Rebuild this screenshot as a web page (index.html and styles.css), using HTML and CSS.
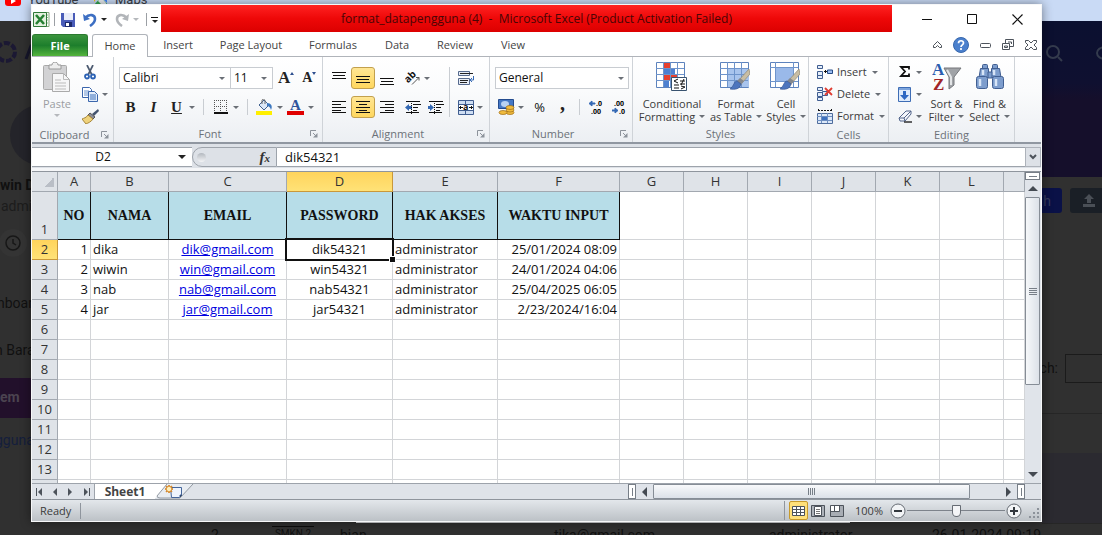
FILE: index.html
```html
<!DOCTYPE html>
<html lang="en">
<head>
<meta charset="utf-8">
<title>format_datapengguna (4) - Microsoft Excel</title>
<link rel="stylesheet" href="styles.css">
</head>
<body>
<svg class="defs" aria-hidden="true">
  <symbol id="launch" viewBox="0 0 8 8"><path d="M.5 6V.5H6M3 3l3 3" fill="none" stroke="#8d939b"/><path d="M7.500 3v4.500H3z" fill="#8d939b"/></symbol>
  <symbol id="brush" viewBox="0 0 20 22"><path d="M19 0 9 11l3 3L20 5z" fill="#c8bda4" stroke="#8f8671" stroke-width=".7"/><path d="m10 9-3 3 4 4 3-4z" fill="#85888d"/><path d="M7 12c-3 0-3 5-7 8 5 1 10 0 11-5z" fill="#4d75bd" stroke="#314f8c" stroke-width=".6"/></symbol>
</svg>

<div class="backdrop">
  <div class="browser-bar"></div>
  <div class="page-head"></div>
  <div class="bg-item yt-icon"><svg width="16" height="11" viewBox="0 0 16 11"><rect width="16" height="11" rx="3" fill="#f00"/><path d="m6 3 5 3-5 3z" fill="#fff"/></svg></div>
  <span class="bg-item bookmark yt-text">YouTube</span>
  <div class="bg-item maps-icon"><svg width="14" height="10" viewBox="0 0 14 10"><path d="M0 0h5l-5 7z" fill="#fbbc04"/><path d="M0 10 7 2l7 8z" fill="#34a853"/><path d="m7 2 2-2h4v8z" fill="#4285f4"/><path d="m4 6 3-4 5 6v2H8z" fill="#e9edf2"/></svg></div>
  <span class="bg-item bookmark maps-text">Maps</span>
  <div class="bg-item brand-mark"><svg width="34" height="26" viewBox="0 0 34 26"><g fill="none" stroke="#1b1833" stroke-width="4"><circle cx="6" cy="13" r="9" stroke-dasharray="6 2"/></g><path d="m26 20 5-13h3" fill="none" stroke="#16162b" stroke-width="3"/></svg></div>
  <div class="bg-item avatar"></div>
  <span class="bg-item bold user-name">win D</span>
  <span class="bg-item dim user-role">admin</span>
  <div class="bg-item clock"><svg width="30" height="30" viewBox="0 0 30 30"><circle cx="15" cy="15" r="14" fill="#343434"/><circle cx="15" cy="15" r="7" fill="none" stroke="#171717" stroke-width="1.500"/><path d="M15 11v4l3 2" fill="none" stroke="#171717" stroke-width="1.500"/></svg></div>
  <span class="bg-item side-a">nboar</span>
  <span class="bg-item side-b">n Bara</span>
  <div class="bg-item side-active">em</div>
  <a class="bg-item side-link" href="#">gguna</a>
  <div class="bg-item search-icon"><svg width="20" height="20" viewBox="0 0 20 20"><circle cx="8" cy="8" r="6" fill="none" stroke="#343b4d" stroke-width="2"/><path d="m13 13 4 4" stroke="#343b4d" stroke-width="2"/></svg></div>
  <div class="bg-item ring"></div>
  <button class="bg-item page-btn blue-btn">h</button>
  <button class="bg-item page-btn gray-btn" aria-label="Upload"><svg width="14" height="14" viewBox="0 0 14 14"><path d="m7 0 5 5H9v4H5V5H2zM1 10h12v3H1z" fill="#4a4f56"/></svg></button>
  <label class="bg-item filter" for="filter">ch:</label><input class="bg-item filter-box" id="filter">
  <div class="bg-item panel-rules"></div>
  <div class="bg-item strip"></div>
  <div class="bg-item under-row"><span>2</span><span class="unit">SMKN 2</span><span>bian</span><span>tika@gmail.com</span><span>administrator</span><span>26-01-2024 09:19</span></div>
</div>

<main class="window">
  <header class="titlebar">
    <div class="quick">
      <svg class="app" width="17" height="17" viewBox="0 0 17 17"><path d="M9 1.500h7v14H9z" fill="#fff" stroke="#86a67f"/><path d="M11 4h4M11 6.500h4M11 9h4M11 12h4" stroke="#8cb887"/><path d="M.5 1.500h13v14H.5z" fill="#e4f0df" stroke="#2f7938"/><path d="m3 4 8 9M11 4l-8 9" stroke="#268033" stroke-width="2.600"/></svg>
      <i class="vr small"></i>
      <button class="save" aria-label="Save"><svg width="14" height="14" viewBox="0 0 14 14"><path d="M0 0h14v14H2l-2-2z" fill="#4a5cb8"/><path d="M3 0h9v7H3z" fill="#e9edf9"/><path d="M4 9h7v5H4z" fill="#1d2a6c"/><path d="M5 10h3v3H5z" fill="#fff"/></svg></button>
      <button class="undo" aria-label="Undo"><svg width="14" height="14" viewBox="0 0 14 14"><path d="M2 5c5-5 10-3 10 1 0 3-2 5-5 7" fill="none" stroke="#3d6fc3" stroke-width="2.600"/><path d="m0 1 1 7 6-2z" fill="#3d6fc3"/></svg></button>
      <i class="caret dark"></i>
      <button class="redo" aria-label="Redo"><svg width="14" height="14" viewBox="0 0 14 14"><path d="M12 5C7 0 2 2 2 6c0 3 2 5 5 7" fill="none" stroke="#b2b5b9" stroke-width="2.600"/><path d="m14 1-1 7-6-2z" fill="#b2b5b9"/></svg></button>
      <i class="caret light"></i>
      <i class="vr small"></i>
      <button class="more" aria-label="Customize"><i class="bar"></i><i class="caret dark"></i></button>
    </div>
    <h1 class="title">format_datapengguna (4) &nbsp;-&nbsp; Microsoft Excel (Product Activation Failed)</h1>
    <div class="controls">
      <button aria-label="Minimize"><svg width="10" height="10"><path d="M0 5.500h10" stroke="#111"/></svg></button>
      <button aria-label="Maximize"><svg width="10" height="10"><path d="M.5.5h9v9h-9z" fill="none" stroke="#111"/></svg></button>
      <button aria-label="Close"><svg width="11" height="11"><path d="m.5.5 10 10m0-10-10 10" stroke="#111" stroke-width="1.200"/></svg></button>
    </div>
  </header>

  <nav class="tabs">
    <button class="file">File</button>
    <button class="tab active">Home</button>
    <button class="tab">Insert</button>
    <button class="tab t3">Page Layout</button>
    <button class="tab t4">Formulas</button>
    <button class="tab t5">Data</button>
    <button class="tab t6">Review</button>
    <button class="tab t7">View</button>
    <div class="doc-controls">
      <button aria-label="Collapse ribbon"><svg width="9" height="8" viewBox="0 0 9 8"><path d="m.5 4.500 4-4 4 4v2H6.500l-2-2-2 2h-2z" fill="#fff" stroke="#4d535b"/></svg></button>
      <button aria-label="Help"><svg width="16" height="16" viewBox="0 0 16 16"><circle cx="8" cy="8" r="7.500" fill="#4b80cd" stroke="#3767ad"/><path d="M5.500 6.200C5.500 3 10.700 3 10.500 6c0 2-2.500 1.700-2.500 4M8 11v2" fill="none" stroke="#fff" stroke-width="1.700"/></svg></button>
      <button aria-label="Minimize workbook"><svg width="11" height="5"><rect x=".5" y=".5" width="10" height="4" rx="1" fill="#fff" stroke="#4d535b"/></svg></button>
      <button aria-label="Restore workbook"><svg width="12" height="12" viewBox="0 0 12 12"><path d="M3.500.5h8v7h-8zM6 3h3.500v2" fill="#fff" stroke="#4d535b"/><path d="M.5 4.500h7v6h-7z" fill="#fff" stroke="#4d535b"/><path d="M2.500 7h3v1.500h-3z" fill="none" stroke="#4d535b"/></svg></button>
      <button aria-label="Close workbook"><svg width="12" height="10" viewBox="0 0 12 10"><path d="M.5.500h3L6 3 8.500.500h3v2L9 5l2.500 2.500v2h-3L6 7 3.500 9.500h-3v-2L3 5 .5 2.500z" fill="#fff" stroke="#4d535b"/></svg></button>
    </div>
  </nav>

  <section class="ribbon">
    <div class="group g-clip">
      <div class="body">
        <button class="big paste"><svg width="28" height="32" viewBox="0 0 28 32"><rect x=".5" y="3.500" width="23" height="24" rx="1" fill="#d2d2d4" stroke="#aaa"/><path d="M6 3h3c0-4 6-4 6 0h3v4H6z" fill="#eee" stroke="#999"/><path d="M9.500 11.500h11l6 6v12h-17z" fill="#f6f6f7" stroke="#aaa"/><path d="M20.500 11.500v6h6M12 18h6M12 21h11M12 24h11M12 27h11" fill="none" stroke="#bbb"/></svg><span>Paste</span><i class="caret light"></i></button>
        <div class="stack">
          <button aria-label="Cut"><svg width="16" height="15" viewBox="0 0 16 15"><path d="m5 0 5 10M11 0 6 10" stroke="#4c5a70" stroke-width="1.700"/><g fill="none" stroke="#2c62b4" stroke-width="1.800"><circle cx="5" cy="11.500" r="2"/><circle cx="11" cy="11.500" r="2"/></g></svg></button>
          <button aria-label="Copy"><svg width="16" height="15" viewBox="0 0 16 15"><path d="M.5.500h7l2 2v8h-9z" fill="#fff" stroke="#3b66ac"/><path d="M2 4h5M2 6h5M2 8h5" stroke="#6b93ce"/><path d="M6.500 4.500h6l3 3v7h-9z" fill="#e4eefb" stroke="#3b66ac"/><path d="M8 8h6M8 10h6M8 12h6" stroke="#3d71bb"/></svg><i class="caret"></i></button>
          <button aria-label="Format painter"><svg width="17" height="15" viewBox="0 0 17 15"><path d="m16 0-6 5 2 2 5-5z" fill="#44546f"/><path d="m8 4 5 4-2 2-5-4z" fill="#8c8d98" stroke="#555"/><path d="m6 6 5 4c-2 3-5 4-7 5L0 10c2-1 4-1 6-4z" fill="#efd27b" stroke="#a6863a"/></svg></button>
        </div>
      </div>
      <div class="caption"><span>Clipboard</span><svg width="8" height="8"><use href="#launch"/></svg></div>
    </div>

    <div class="group g-font">
      <div class="body rows">
        <div class="line">
          <span class="combo face"><select aria-label="Font"><option>Calibri</option></select><i class="caret"></i></span><span class="combo size"><select aria-label="Font size"><option>11</option></select><i class="caret"></i></span>
          <button class="grow serif" aria-label="Grow font">A<i class="up"></i></button><button class="shrink serif" aria-label="Shrink font">A<i class="down"></i></button>
        </div>
        <div class="line">
          <button class="ib serif">B</button><button class="ib serif it">I</button><button class="ib serif un">U</button><i class="caret"></i><i class="vr"></i>
          <button class="ib" aria-label="Borders"><svg width="14" height="14"><path d="M.5 0v13M6.500 0v13M12.500 0v13M0 .5h13M0 6.500h13" stroke="#555" stroke-dasharray="1 1"/><path d="M0 13h14" stroke="#111" stroke-width="2"/></svg></button><i class="caret"></i><i class="vr"></i>
          <button class="ib" aria-label="Fill color"><svg width="17" height="16" viewBox="0 0 17 16"><path d="m3 6 5-5 5 5-5 5z" fill="#dbe7f7" stroke="#41618f"/><path d="M6 5V2c0-3 3-2 3 0v3" fill="none" stroke="#666"/><path d="M11 4c4 0 6 3 4 7-1-3-2-4-4-4z" fill="#3c77bf"/><path d="M0 12h16v4H0z" fill="#ffef00"/></svg></button><i class="caret"></i>
          <button class="ib" aria-label="Font color"><span class="fcolor">A</span></button><i class="caret"></i>
        </div>
      </div>
      <div class="caption"><span>Font</span><svg width="8" height="8"><use href="#launch"/></svg></div>
    </div>

    <div class="group g-align">
      <div class="body split">
        <div class="rows">
          <div class="line">
            <button class="ib al" aria-label="Top align"><svg width="14" height="14"><path d="M0 1.500h14M1 4.500h12M0 7.500h14" stroke="#111"/></svg></button>
            <button class="ib al on" aria-label="Middle align"><svg width="14" height="14"><path d="M0 5.500h14M1 8.500h12M0 11.500h14" stroke="#111"/></svg></button>
            <button class="ib al" aria-label="Bottom align"><svg width="14" height="14"><path d="M0 7.500h14M1 10.500h12M0 13.500h14" stroke="#111"/></svg></button>
            <button class="ib orient" aria-label="Orientation"><svg width="16" height="14" viewBox="0 0 16 14"><text x="2" y="12" transform="rotate(-45 3 11)" class="ab">ab</text><path d="m7 13.500 7-7m-3 0h3v3" fill="none" stroke="#555"/></svg></button><i class="caret"></i>
          </div>
          <div class="line">
            <button class="ib al" aria-label="Align left"><svg width="14" height="12"><path d="M0 .5h14M0 3.500h9M0 6.500h14M0 9.500h9M0 11.500h14" stroke="#111"/></svg></button>
            <button class="ib al on" aria-label="Center"><svg width="14" height="12"><path d="M0 .5h14M3 3.500h8M0 6.500h14M3 9.500h8M0 11.500h14" stroke="#111"/></svg></button>
            <button class="ib al" aria-label="Align right"><svg width="14" height="12"><path d="M0 .5h14M5 3.500h9M0 6.500h14M5 9.500h9M0 11.500h14" stroke="#111"/></svg></button>
            <button class="ib orient" aria-label="Decrease indent"><svg width="16" height="13"><path d="M1 .5h14M8 3.500h8M8 6.500h5M8 9.500h4M1 11.500h13" stroke="#111"/><path d="M0 6.500 4 3v2h3v3H4v2z" fill="#3569b4"/><path d="M6.500 0v13" stroke="#111" stroke-dasharray="1 1"/></svg></button>
            <button class="ib" aria-label="Increase indent"><svg width="16" height="13"><path d="M1 .5h14M8 3.500h8M8 6.500h5M8 9.500h4M1 11.500h13" stroke="#111"/><path d="M6 6.500 2 3v2H0v3h2v2z" fill="#3569b4"/><path d="M6.500 0v13" stroke="#111" stroke-dasharray="1 1"/></svg></button>
          </div>
        </div>
        <i class="vr tall"></i>
        <div class="rows">
          <div class="line"><button class="ib" aria-label="Wrap text"><svg width="16" height="15"><path d="M.5.500h11v4H.5zM.5 7.500h11v6H.5z" fill="#e7edf6" stroke="#55698d"/><path d="M2 2.500h13M2 9.500h8M2 11.500h7" stroke="#222"/><path d="M15.500 5v4H13m1-2-2 2 2 2" fill="none" stroke="#3569b4"/></svg></button></div>
          <div class="line"><button class="ib" aria-label="Merge and center"><svg width="16" height="15"><path d="M.5.500h15v14H.5z" fill="#cfdef3" stroke="#3f5d90"/><path d="M1 4.500h14M1 10.500h14M7.500 0v4M7.500 11v3" stroke="#3f5d90"/><path d="M1 5h14v5H1z" fill="#fff"/><path d="M1 7.500h4M11 7.500h4M3 6 1.500 7.500 3 9M13 6l1.500 1.500L13 9" fill="none" stroke="#111"/><text x="5" y="10" class="tiny-a">a</text></svg></button><i class="caret"></i></div>
        </div>
      </div>
      <div class="caption"><span>Alignment</span><svg width="8" height="8"><use href="#launch"/></svg></div>
    </div>

    <div class="group g-num">
      <div class="body rows">
        <div class="line"><span class="combo wide"><select aria-label="Number format"><option>General</option></select><i class="caret"></i></span></div>
        <div class="line">
          <button class="ib" aria-label="Accounting"><svg width="17" height="16" viewBox="0 0 17 16"><path d="M.5.500h15v9H.5z" fill="#4578c5" stroke="#244c8f"/><ellipse cx="7" cy="5" rx="4" ry="3" fill="#b9d2f3"/><g fill="#f1bc3e" stroke="#9e6d17" stroke-width=".7"><ellipse cx="12" cy="13.500" rx="4" ry="2"/><ellipse cx="12" cy="11" rx="4" ry="2"/><ellipse cx="12" cy="8.500" rx="4" ry="2"/><ellipse cx="5" cy="13.500" rx="4" ry="2"/></g></svg></button><i class="caret"></i>
          <button class="ib pct">%</button><button class="ib comma serif">,</button><i class="vr"></i>
          <button class="ib dec" aria-label="Increase decimal"><svg width="17" height="15"><path d="M0 3.500 3 1v2h3v1H3v2z" fill="#3569b4" stroke="#3569b4"/><text x="7" y="6">.0</text><text x="2" y="14">.00</text></svg></button>
          <button class="ib dec" aria-label="Decrease decimal"><svg width="17" height="15"><path d="M6 10.500 3 8v2H0v1h3v2z" fill="#3569b4" stroke="#3569b4"/><text x="2" y="6">.00</text><text x="7" y="14">.0</text></svg></button>
        </div>
      </div>
      <div class="caption"><span>Number</span><svg width="8" height="8"><use href="#launch"/></svg></div>
    </div>

    <div class="group g-style">
      <div class="body bigs">
        <button class="big"><svg width="32" height="30" viewBox="0 0 32 30"><path d="M.5.500h28v25H.5z" fill="#fff" stroke="#5d83bd"/><path d="M8 1h7v5H8zM8 13h13v6H8z" fill="#e6402e"/><path d="M8 7h11v6H8zM8 19h5v6H8z" fill="#4d80d0"/><path d="M0 6.500h28M0 12.500h28M0 18.500h28M7.500 0v25M14.500 0v25M21.500 0v25" stroke="#6e94cb"/><path d="M15.500 15.500h15v13h-15z" fill="#fff" stroke="#38526f"/><path d="m22 17-4 2 4 2M18 23h5M18 26h5M24 19h5M24 22h5M28 17l-3 6M25 24l4 1-4 2" fill="none" stroke="#111"/></svg><span>Conditional</span><span>Formatting <i class="caret"></i></span></button>
        <button class="big"><svg width="32" height="30" viewBox="0 0 32 30"><path d="M.5.500h28v25H.5z" fill="#fff" stroke="#5d83bd"/><path d="M8 7h21v18H8z" fill="#a8c4ed"/><path d="M0 6.500h28M0 12.500h28M0 18.500h28M7.500 0v25M14.500 0v25M21.500 0v25" stroke="#6e94cb"/><use href="#brush" x="10" y="7" width="20" height="22"/></svg><span>Format</span><span>as Table <i class="caret"></i></span></button>
        <button class="big"><svg width="32" height="30" viewBox="0 0 32 30"><path d="M.5.500h28v25H.5z" fill="#fff" stroke="#5d83bd"/><path d="M6 6h18v13H6z" fill="#9ab9e9"/><path d="M0 5.500h28M0 19.500h28M5.500 0v25M23.500 0v25" stroke="#6e94cb"/><use href="#brush" x="10" y="7" width="20" height="22"/></svg><span>Cell</span><span>Styles <i class="caret"></i></span></button>
      </div>
      <div class="caption"><span>Styles</span></div>
    </div>

    <div class="group g-cells">
      <div class="body stack wide-stack">
        <button><svg width="16" height="14"><path d="M.5.500h5v3h-5zM.5 10.500h5v3h-5zM.5 6.500h5v4h-5z" fill="#e3edfa" stroke="#3f5d90"/><path d="M7 6.500h3M8.500 5v3" stroke="#111"/><path d="M10.500 5h5v3.500h-5z" fill="#9bbcf0" stroke="#244a85"/></svg><span>Insert</span><i class="caret"></i></button>
        <button><svg width="16" height="14"><path d="M.5.500h5v3h-5zM.5 10.500h5v3h-5zM.5 5.500h5v4h-5zM5.500 4.500h5v4h-5z" fill="#e3edfa" stroke="#3f5d90"/><path d="m8 1 7 7m0-7L8 8" stroke="#e03c31" stroke-width="1.800"/></svg><span>Delete</span><i class="caret"></i></button>
        <button><svg width="16" height="15"><path d="M1 1.500h14M1.500 0v3M14.500 0v3" stroke="#111" stroke-dasharray="2 1"/><path d="M.5 4.500h15v10H.5z" fill="#dce8f8" stroke="#4e6c9c"/><path d="M0 7.500h15M0 11.500h15M4.500 4v10M10.500 4v10" stroke="#6e8fc1"/><path d="M5 8h5v3H5z" fill="#3e72c1"/></svg><span>Format</span><i class="caret"></i></button>
      </div>
      <div class="caption"><span>Cells</span></div>
    </div>

    <div class="group g-edit">
      <div class="body">
        <div class="stack edit-stack">
          <button aria-label="AutoSum"><svg width="14" height="12" viewBox="0 0 14 12"><path d="M11 3.500V1H3l4 4.500-4 4.500h8V7.500" fill="none" stroke="#111" stroke-width="1.800"/></svg><i class="caret"></i></button>
          <button aria-label="Fill"><svg width="14" height="15"><path d="M.5.500h12v14H.5z" fill="#deebfc" stroke="#3e6db5"/><path d="M1 2h11" stroke="#7da4dc" stroke-width="2"/><path d="M5 4h3v4h3l-4.500 5L2 8h3z" fill="#2d67c3"/></svg><i class="caret"></i></button>
          <button aria-label="Clear"><svg width="14" height="13" viewBox="0 0 14 13"><path d="m1 8 7-7h5v3l-6 7H2z" fill="#f3f5fa" stroke="#53658b"/><path d="m1 8 5 0 7-7M6 8l1 3" fill="none" stroke="#53658b"/><path d="M6 12h8" stroke="#111" stroke-width="1.300"/></svg><i class="caret"></i></button>
        </div>
        <button class="big"><svg width="30" height="30" viewBox="0 0 30 30"><path d="M12 6h17l-7 9v8l-5 4V15z" fill="#a0a3a7" stroke="#74777b"/><path d="m15 8 4 7v8" fill="none" stroke="#e3e5e7" stroke-width="2"/><text x="0" y="13" class="az blue">A</text><text x="1" y="28" class="az red">Z</text></svg><span>Sort &amp;</span><span>Filter <i class="caret"></i></span></button>
        <button class="big"><svg width="30" height="30" viewBox="0 0 30 30"><g fill="#7d9dcd" stroke="#415f92"><rect x="7.500" y="2.500" width="5" height="5" rx="1"/><rect x="17.500" y="2.500" width="5" height="5" rx="1"/><path d="M5.500 6.500h8v9H4zM16.500 6.500h8l1.500 9h-9.500z"/><path d="M13 10h4v6h-4z"/><rect x="1.500" y="14.500" width="11" height="12" rx="2"/><rect x="17.500" y="14.500" width="11" height="12" rx="2"/></g><path d="M5 17v7M21 17v7M8 8v5M19 8v5" stroke="#d8e5f7" stroke-width="2.500"/></svg><span>Find &amp;</span><span>Select <i class="caret"></i></span></button>
      </div>
      <div class="caption"><span>Editing</span></div>
    </div>
  </section>

  <div class="formula">
    <span class="namebox"><input aria-label="Name box" value="D2"><i class="caret dark"></i></span>
    <span class="fx"><i class="knob"></i><em>f<small>x</small></em></span>
    <input class="entry" aria-label="Formula" value="dik54321">
    <button class="expand" aria-label="Expand formula bar"><svg width="8" height="6"><path d="m1 1 3 3 3-3" fill="none" stroke="#4d535b" stroke-width="2"/></svg></button>
  </div>

  <div class="sheet">
    <div class="grid">
      <table>
        <colgroup><col class="c0"><col class="ca"><col class="cb"><col class="cc"><col class="cd"><col class="ce"><col class="cf"><col class="cg"><col class="cg"><col class="cg"><col class="cg"><col class="cg"><col class="cg"><col></colgroup>
        <thead><tr><th class="corner"></th><th>A</th><th>B</th><th>C</th><th class="sel">D</th><th>E</th><th>F</th><th>G</th><th>H</th><th>I</th><th>J</th><th>K</th><th>L</th><th></th></tr></thead>
        <tbody>
          <tr class="heads"><th>1</th><td>NO</td><td>NAMA</td><td>EMAIL</td><td>PASSWORD</td><td>HAK AKSES</td><td>WAKTU INPUT</td><td></td><td></td><td></td><td></td><td></td><td></td><td></td></tr>
          <tr><th class="sel">2</th><td class="r">1</td><td>dika</td><td class="m"><a href="mailto:dik@gmail.com">dik@gmail.com</a></td><td class="m cursor">dik54321</td><td>administrator</td><td class="r">25/01/2024 08:09</td><td></td><td></td><td></td><td></td><td></td><td></td><td></td></tr>
          <tr><th>3</th><td class="r">2</td><td>wiwin</td><td class="m"><a href="mailto:win@gmail.com">win@gmail.com</a></td><td class="m">win54321</td><td>administrator</td><td class="r">24/01/2024 04:06</td><td></td><td></td><td></td><td></td><td></td><td></td><td></td></tr>
          <tr><th>4</th><td class="r">3</td><td>nab</td><td class="m"><a href="mailto:nab@gmail.com">nab@gmail.com</a></td><td class="m">nab54321</td><td>administrator</td><td class="r">25/04/2025 06:05</td><td></td><td></td><td></td><td></td><td></td><td></td><td></td></tr>
          <tr><th>5</th><td class="r">4</td><td>jar</td><td class="m"><a href="mailto:jar@gmail.com">jar@gmail.com</a></td><td class="m">jar54321</td><td>administrator</td><td class="r">2/23/2024/16:04</td><td></td><td></td><td></td><td></td><td></td><td></td><td></td></tr>
          <tr><th>6</th><td></td><td></td><td></td><td></td><td></td><td></td><td></td><td></td><td></td><td></td><td></td><td></td><td></td></tr>
          <tr><th>7</th><td></td><td></td><td></td><td></td><td></td><td></td><td></td><td></td><td></td><td></td><td></td><td></td><td></td></tr>
          <tr><th>8</th><td></td><td></td><td></td><td></td><td></td><td></td><td></td><td></td><td></td><td></td><td></td><td></td><td></td></tr>
          <tr><th>9</th><td></td><td></td><td></td><td></td><td></td><td></td><td></td><td></td><td></td><td></td><td></td><td></td><td></td></tr>
          <tr><th>10</th><td></td><td></td><td></td><td></td><td></td><td></td><td></td><td></td><td></td><td></td><td></td><td></td><td></td></tr>
          <tr><th>11</th><td></td><td></td><td></td><td></td><td></td><td></td><td></td><td></td><td></td><td></td><td></td><td></td><td></td></tr>
          <tr><th>12</th><td></td><td></td><td></td><td></td><td></td><td></td><td></td><td></td><td></td><td></td><td></td><td></td><td></td></tr>
          <tr><th>13</th><td></td><td></td><td></td><td></td><td></td><td></td><td></td><td></td><td></td><td></td><td></td><td></td><td></td></tr>
          <tr><th></th><td></td><td></td><td></td><td></td><td></td><td></td><td></td><td></td><td></td><td></td><td></td><td></td><td></td></tr>
        </tbody>
      </table>
    </div>
    <div class="vscroll">
      <i class="split-v"></i>
      <button aria-label="Scroll up"><i class="arrow up-a"></i></button>
      <div class="track"><div class="thumb"><i></i><i></i><i></i><i></i></div></div>
      <button aria-label="Scroll down"><i class="arrow down-a"></i></button>
    </div>
  </div>

  <div class="sheetbar">
    <div class="navs">
      <button aria-label="First sheet"><svg width="7" height="8"><path d="M.5 0v8" stroke="#4d535b"/><path d="M6 0v8L2 4z" fill="#4d535b"/></svg></button>
      <button aria-label="Previous sheet"><svg width="7" height="8"><path d="M5 0v8L1 4z" fill="#4d535b"/></svg></button>
      <button aria-label="Next sheet"><svg width="7" height="8"><path d="M1 0v8l4-4z" fill="#4d535b"/></svg></button>
      <button aria-label="Last sheet"><svg width="7" height="8"><path d="M6.500 0v8" stroke="#4d535b"/><path d="M1 0v8l4-4z" fill="#4d535b"/></svg></button>
    </div>
    <button class="sheet-tab">Sheet1</button>
    <button class="new-sheet" aria-label="Insert sheet"><svg width="48" height="15" viewBox="0 0 48 15"><path d="M0 0h14L5 11q-2 3-5 3z" fill="#fff"/><path d="M12 0 2 12q0 2 3 2h20L38 0" fill="#e9edf2" stroke="#9299a2"/><path d="M15.500 3.500h11v8l-2 2h-8z" fill="#eef4fd" stroke="#44659a"/><path d="M25 13v-2h2" stroke="#44659a"/><path d="m14 1 1 2 2-1-1 2 2 1-2 1 1 2-2-1-1 2-1-2-2 1 1-2-2-1 2-1-1-2 2 1z" fill="#fff0b8" stroke="#d38225"/></svg></button>
    <div class="hscroll">
      <i class="split-h"></i>
      <button aria-label="Scroll left"><i class="arrow left-a"></i></button>
      <div class="htrack"><div class="hthumb"><i></i><i></i><i></i><i></i></div></div>
      <button aria-label="Scroll right"><i class="arrow right-a"></i></button>
      <i class="split-h"></i>
    </div>
  </div>

  <footer class="status">
    <span class="ready">Ready</span>
    <div class="views">
      <button class="view on" aria-label="Normal"><svg width="13" height="10"><path d="M.5.500h12v9H.5zM0 3.500h13M0 6.500h13M4.500 0v10M8.500 0v10" fill="#fff" stroke="#4d535b"/></svg></button>
      <button class="view" aria-label="Page layout"><svg width="14" height="12"><path d="M.5.500h13v11H.5z" fill="#adb2b9" stroke="#4d535b"/><path d="M3.500 1.500h7v9h-7z" fill="#fff" stroke="#4d535b"/><path d="M5 4.500h4M5 6.500h4M5 8.500h4" stroke="#777"/></svg></button>
      <button class="view" aria-label="Page break"><svg width="14" height="12"><path d="M.5.500h13v11H.5z" fill="#a8adb4" stroke="#4d535b"/><path d="M1 1h3v5H1zM5 1h4v5H5z" fill="#fff"/><path d="M4.500 0v6M9.500 0v6.500H0" fill="none" stroke="#4d535b"/></svg></button>
    </div>
    <span class="percent">100%</span>
    <button class="round" aria-label="Zoom out"><svg width="16" height="16"><circle cx="8" cy="8" r="7" fill="#f2f4f6" stroke="#666c74"/><path d="M4 8h8" stroke="#33383e" stroke-width="2"/></svg></button>
    <input class="zoom" type="range" min="0" max="100" value="50" aria-label="Zoom">
    <button class="round" aria-label="Zoom in"><svg width="16" height="16"><circle cx="8" cy="8" r="7" fill="#f2f4f6" stroke="#666c74"/><path d="M4 8h8M8 4v8" stroke="#33383e" stroke-width="2"/></svg></button>
    <svg class="grip" width="11" height="11"><path d="M8 0h2v2H8zM4 4h2v2H4zM8 4h2v2H8zM0 8h2v2H0zM4 8h2v2H4zM8 8h2v2H8z" fill="#8c929a"/></svg>
  </footer>
</main>
</body>
</html>
```

FILE: styles.css
```css
* { box-sizing: border-box; }
html, body { height: 100%; }
body { margin: 0; overflow: hidden; background: #303030; font: 12px/16px "Open Sans", "Noto Sans", sans-serif; color: #3b3b3b; }
button { appearance: none; border: 0; padding: 0; margin: 0; background: none; font: inherit; color: inherit; display: flex; align-items: center; justify-content: center; }
input, select { appearance: none; border: 0; padding: 0; margin: 0; background: none; font: inherit; color: #111; min-width: 0; border-radius: 0; }
svg { display: block; flex: none; }
.defs { position: absolute; width: 0; height: 0; }
.serif { font-family: "Liberation Serif", serif; font-weight: bold; color: #222; }

.backdrop { position: absolute; inset: 0; overflow: hidden; font: 14px/18px Roboto, sans-serif; color: #101010; white-space: nowrap; }
.browser-bar { height: 21px; background: #c9daf5; }
.page-head { height: 156px; margin-left: 50%; background: linear-gradient(#0b1030, #0f1030 40%, #150f2b 50%, #150f2b); }
.bg-item { position: absolute; }
.yt-icon { left: 5px; top: -5px; }
.bookmark { font-size: 13px; color: #3a3f48; top: -9px; }
.yt-text { left: 28px; }
.maps-icon { left: 94px; top: -5px; }
.maps-text { left: 115px; }
.brand-mark { left: 0; top: 39px; }
.avatar { left: 10px; top: 105px; width: 60px; height: 60px; border-radius: 50%; background: #24242a; }
.bold { font-weight: bold; }
.dim { color: #1c1c1c; }
.user-name { left: 0; top: 176px; }
.user-role { left: 1px; top: 197px; }
.clock { left: -2px; top: 228px; }
.side-a { left: -3px; top: 294px; }
.side-b { left: -5px; top: 341px; }
.side-active { left: 0; top: 378px; width: 60px; height: 40px; line-height: 38px; background: #22102b; color: #4b4350; font-weight: bold; }
.side-link { left: -5px; top: 431px; color: #141e3c; text-decoration: none; }
.search-icon { right: 37px; top: 44px; }
.ring { right: -12px; top: 46px; width: 18px; height: 14px; border: 2px solid #343b4d; border-radius: 50%; }
.page-btn { height: 25px; top: 188px; border-radius: 3px; }
.blue-btn { right: 40px; width: 30px; background: #0a1147; color: #343a5c; }
.gray-btn { right: -18px; width: 50px; background: #1a1f26; padding-right: 12px; }
.filter { right: 44px; top: 359px; }
.filter-box { left: calc(100% - 37px); top: 354px; width: 80px; height: 29px; border: 1px solid #1b1b1b; }
.panel-rules { right: 0; top: 413px; width: 60px; height: 111px; border: 1px solid #262626; border-width: 1px 0; background: linear-gradient(#303030 39px, #2b2a30 39px); }
.strip { left: 356px; right: 252px; top: 521px; height: 2px; background: #d8dadd; }
.under-row { left: 211px; right: 40px; top: 526px; display: grid; grid-template-columns: 61px 68px 214px 215px 163px 1fr; }
.unit { font-size: 10px; line-height: 14px; width: 42px; border-top: 1px solid #0c0c0c; text-align: center; }

.window { position: absolute; inset: 4px 60px 13px 31px; display: flex; flex-direction: column; background: #fff; border: 1px solid #f6f7f8; box-shadow: 0 0 10px rgba(0, 0, 0, .45); }

.titlebar { display: flex; height: 29px; flex: none; }
.quick { display: flex; align-items: center; width: 129px; padding-left: 1px; flex: none; }
.vr { width: 1px; height: 16px; background: #c9cdd2; flex: none; }
.vr.small { height: 13px; background: #9b9fa4; margin-left: 4px; }
.caret + .vr.small { margin-left: 7px; }
.save { margin-left: 6px; }
.undo, .redo { margin: 0 4px 0 8px; }
.more { flex-direction: column; gap: 2px; margin-left: 4px; }
.bar { width: 7px; height: 1px; background: #111; }
.caret { display: inline-block; width: 0; height: 0; border: 3px solid transparent; border-bottom: 0; border-top-color: #6a6f76; flex: none; }
.caret.dark { border-top-color: #222; }
.caret.light { border-top-color: #b5b8bc; }
.title { flex: 1; margin: 0 0 2px; padding-left: 20px; font-size: 12px; line-height: 27px; font-weight: normal; text-align: center; color: #4a0505; background: linear-gradient(#f22 0, #ee0808 50%, #dc0000); white-space: nowrap; overflow: hidden; }
.controls { display: flex; width: 149px; flex: none; padding: 0 1px 0 12px; }
.controls button { flex: 1; height: 28px; }

.tabs { display: flex; height: 23px; flex: none; border-bottom: 1px solid #b0b4ba; font-size: 11px; }
.file { width: 56px; background: linear-gradient(#3b943d, #1d7e2c 50%, #54b43d); border: 1px solid #2c7a30; border-bottom: 0; border-radius: 3px 3px 0 0; color: #fff; font-weight: bold; }
.tab { width: 60px; white-space: nowrap; color: #444; }
.tab.active { width: 56px; margin: 0 0 -1px 4px; border: 1px solid #b0b4ba; border-bottom: 0; border-radius: 3px 3px 0 0; background: #fff; }
.t3 { width: 86px; }
.t4 { width: 78px; }
.t5 { width: 50px; }
.t6 { width: 66px; }
.t7 { width: 50px; }
.doc-controls { display: flex; align-items: center; gap: 11px; margin-left: auto; padding-right: 4px; }

.ribbon { display: flex; height: 87px; flex: none; background: linear-gradient(#fff, #fafbfc 40%, #eceff3); border-bottom: 2px solid #9097a1; }
.group { display: flex; flex-direction: column; flex: none; border-right: 1px solid #cfd3d8; }
.body { flex: 1; display: flex; padding-top: 4px; }
.caption { display: flex; align-items: center; height: 17px; padding: 0 4px; color: #6c7178; font-size: 11px; }
.caption span { flex: 1; text-align: center; }
.caption svg { margin-left: 8px; }
.g-clip { width: 82px; }
.g-font { width: 209px; }
.g-align { width: 167px; }
.g-num { width: 143px; }
.g-style { width: 176px; }
.g-cells { width: 80px; }
.g-edit { width: 126px; }
.big { flex-direction: column; justify-content: flex-start; line-height: 13px; height: 64px; font-size: 11px; white-space: nowrap; }
.big > svg { margin: 1px 0 5px; }
.big span { display: flex; align-items: center; gap: 4px; }
.paste { width: 50px; color: #9a9da2; }
.paste > svg { margin-bottom: 3px; }
.paste .caret { margin-top: 4px; }
.stack { display: flex; flex-direction: column; align-items: flex-start; }
.stack button { height: 22px; gap: 4px; font-size: 11px; }
.rows { display: flex; flex-direction: column; gap: 7px; }
.rows.body, .split { padding-top: 10px; }
.line { display: flex; align-items: center; height: 22px; }
.combo { position: relative; display: flex; height: 22px; border: 1px solid #c8ccd1; background: #fff; }
.combo select { width: 100%; padding-left: 3px; }
.combo .caret { position: absolute; right: 4px; top: 9px; }
.face { width: 112px; margin-left: 5px; }
.size { width: 43px; margin-left: -1px; }
.wide { width: 134px; margin-left: 5px; }
.grow { font-size: 17px; margin-left: 5px; }
.shrink { font-size: 14px; margin-left: 8px; }
.up, .down { border: 2px solid transparent; margin-top: -10px; }
.up { border-top: 0; border-bottom: 3px solid #2e4f8f; }
.down { border-bottom: 0; border-top: 3px solid #2e4f8f; }
.ib { width: 23px; height: 22px; flex: none; }
.g-font .line > .ib:first-child { margin-left: 5px; }
.g-font .ib.serif { font-size: 15px; }
.it { font-style: italic; }
.un { text-decoration: underline; }
.g-font .caret { margin: 0 1px; }
.g-font .vr { margin: 0 5px 0 7px; }
.fcolor { font: bold 15px/12px "Liberation Serif", serif; color: #2f559c; border-bottom: 4px solid #e00000; padding: 0 3px; }
.al { width: 24px; border: 1px solid transparent; }
.al.on { background: linear-gradient(#ffe694, #ffd75e); border-color: #c2a04d; border-radius: 3px; }
.split > .rows:first-child { width: 126px; padding-left: 4px; }
.orient { margin-left: 2px; }
.ab { font: bold 10px "Open Sans", sans-serif; fill: #111; }
.tiny-a { font: bold 9px "Open Sans", sans-serif; fill: #111; }
.tall { height: 50px; margin-right: 4px; }
.g-num .line > .ib:first-child { margin-left: 5px; }
.pct { font-size: 13px; color: #111; margin-left: 4px; }
.comma { font-size: 20px; line-height: 8px; padding-bottom: 8px; }
.g-num .vr { margin: 0 6px 0 5px; }
.dec { font: bold 7px "Open Sans", sans-serif; color: #111; }
.bigs { justify-content: flex-start; gap: 6px; padding-left: 6px; }
.bigs .big:nth-child(1) { width: 66px; }
.bigs .big:nth-child(2) { width: 50px; }
.bigs .big:nth-child(3) { width: 38px; }
.wide-stack { padding-left: 8px; }
.wide-stack .caret { margin-left: 1px; }
.edit-stack { width: 36px; padding-left: 9px; }
.g-edit .big { width: 43px; }
.az { font: bold 17px "Liberation Serif", serif; }
.blue { fill: #2a5db0; }
.red { fill: #a12528; }

.formula { display: flex; height: 28px; flex: none; padding: 3px 0 4px; background: linear-gradient(#dde1e7 24px, #f5f6f8 24px); border-bottom: 1px solid #8f959d; }
.namebox { display: flex; align-items: center; width: 160px; background: #fff; border-top: 1px solid #9da3ab; border-bottom: 1px solid #9da3ab; }
.namebox input { flex: 1; text-align: center; padding-right: 4px; }
.namebox .caret { margin-right: 6px; border-width: 4px; border-bottom: 0; }
.fx { display: flex; align-items: center; justify-content: space-between; width: 85px; padding: 0 6px 0 4px; background: #dde1e7; border: 1px solid #9da3ab; border-radius: 10px 0 0 10px; }
.fx em { font: italic bold 15px/16px "Liberation Serif", serif; color: #333; }
.fx small { font-size: 11px; }
.knob { width: 9px; height: 9px; border-radius: 50%; background: linear-gradient(#b3b8bf, #f3f4f6); }
.entry { flex: 1; padding-left: 8px; background: #fff; border-top: 1px solid #9da3ab; border-bottom: 1px solid #9da3ab; font-size: 13px; }
.expand { width: 16px; border: 1px solid #adb2ba; background: #dde1e7; }

.sheet { flex: 1; display: flex; min-height: 0; }
.grid { flex: 1; min-width: 0; overflow: hidden; }
table { width: 100%; table-layout: fixed; border-collapse: separate; border-spacing: 0; font-size: 13px; line-height: 19px; color: #111; }
.c0 { width: 26px; }
.ca { width: 33px; }
.cb { width: 78px; }
.cc { width: 118px; }
.cd { width: 106px; }
.ce { width: 105px; }
.cf { width: 122px; }
.cg { width: 64px; }
th { height: 20px; padding: 0; font-weight: normal; color: #333; background: #dfe3e8; border-right: 1px solid #a2a8b0; border-bottom: 1px solid #a2a8b0; }
td { height: 20px; padding: 0 2px; border-right: 1px solid #d3d5d8; border-bottom: 1px solid #d3d5d8; white-space: nowrap; }
th.sel { background: linear-gradient(#ffd45c, #ffe277); border-color: #c9983a; }
.corner { background: linear-gradient(135deg, transparent 50%, #b9bec6 50%) 12px 5px / 10px 10px no-repeat #dfe3e8; }
.heads { height: 48px; }
.heads th { vertical-align: bottom; }
.heads td:nth-child(-n+7) { background: #b7dde8; border-color: #111; text-align: center; font: bold 14px/18px "Liberation Serif", serif; }
.r { text-align: right; }
.m { text-align: center; }
td a { color: #0000e0; }
.cursor { position: relative; }
.cursor::before { content: ""; position: absolute; inset: -2px; border: 2px solid #111; }
.cursor::after { content: ""; position: absolute; right: -3px; bottom: -3px; width: 5px; height: 5px; background: #111; outline: 1px solid #fff; }

.vscroll { display: flex; flex-direction: column; width: 16px; background: #e0e4ea; padding-right: 1px; }
.split-v { height: 8px; border: 1px solid #777e87; background: linear-gradient(#777e87, #777e87) center / 8px 1px no-repeat #fff; }
.vscroll button { height: 17px; flex: none; }
.arrow { border: 5px solid transparent; }
.up-a { border-top: 0; border-bottom-color: #444a52; }
.down-a { border-bottom: 0; border-top-color: #444a52; }
.left-a { border-left: 0; border-right-color: #444a52; }
.right-a { border-right: 0; border-left-color: #444a52; }
.track { flex: 1; }
.thumb { height: 70%; display: flex; flex-direction: column; align-items: center; justify-content: center; gap: 1px; border: 1px solid #868d96; border-radius: 1px; background: linear-gradient(90deg, #f6f8fa, #dce1e8); }
.thumb i { width: 8px; height: 1px; background: #777e87; }

.sheetbar { display: flex; height: 17px; flex: none; background: #dfe3e9; border-top: 1px solid #9da3ab; border-bottom: 1px solid #8f959d; }
.navs { display: flex; width: 63px; border-right: 1px solid #9da3ab; }
.navs button { flex: 1; }
.sheet-tab { width: 60px; background: #fff; font-weight: bold; color: #444; }
.hscroll { display: flex; flex: none; width: 397px; margin-left: auto; margin-right: 16px; }
.split-h { width: 8px; border: 1px solid #777e87; background: linear-gradient(#777e87, #777e87) center / 1px 8px no-repeat #fff; }
.hscroll button { width: 17px; }
.htrack { flex: 1; padding: 0 30px 0 0; }
.hthumb { height: 15px; display: flex; align-items: center; justify-content: center; gap: 1px; border: 1px solid #868d96; border-radius: 1px; background: linear-gradient(#f8f9fb, #dce1e8); }
.hthumb i { width: 1px; height: 7px; background: #777e87; }

.status { display: flex; align-items: center; height: 21px; flex: none; background: linear-gradient(#e3e7eb, #bcc1c6); color: #3b3b3b; font-size: 11px; }
.ready { width: 49px; padding-left: 8px; border-right: 1px solid #8f959d; }
.views { display: flex; margin-left: auto; border-left: 1px solid #8f959d; padding-left: 4px; }
.view { width: 19px; height: 19px; }
.view.on { background: #ffe07a; border: 1px solid #c79a2c; border-radius: 2px; }
.percent { margin: 0 7px 0 9px; }
.zoom { width: 98px; height: 16px; margin: 0 1px; background: linear-gradient(#7d838b, #7d838b) center / 100% 1px no-repeat; }
.zoom::-webkit-slider-thumb { appearance: none; width: 9px; height: 12px; background: #f4f5f7; border: 1px solid #666c74; border-radius: 1px 1px 5px 5px; }
.grip { margin: 6px 1px 0 7px; }
```
